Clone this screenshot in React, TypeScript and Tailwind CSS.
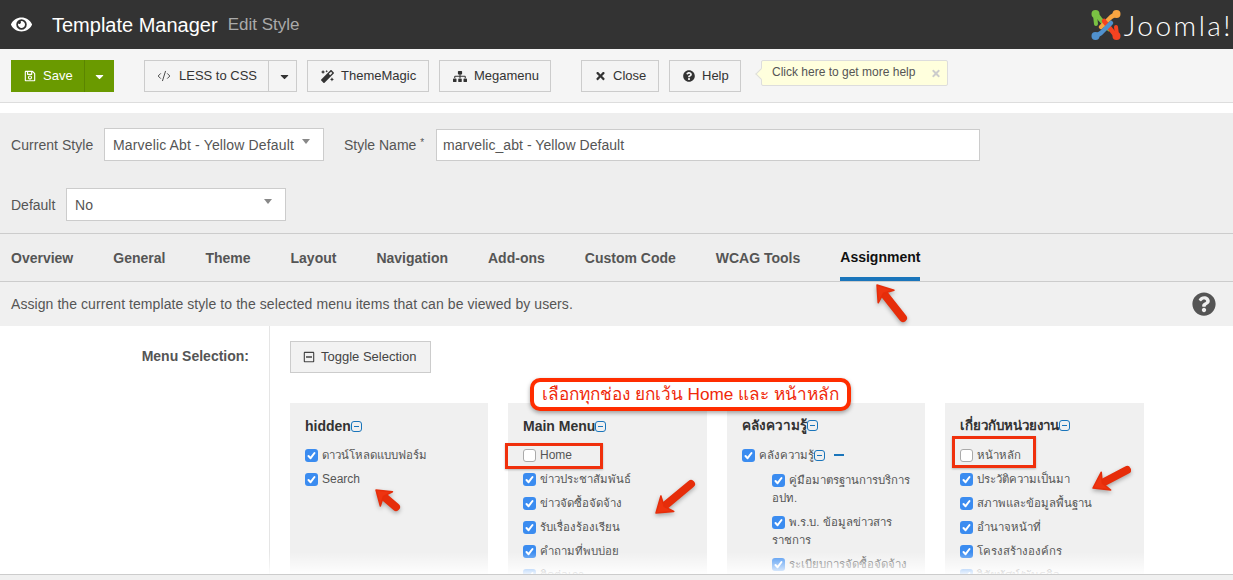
import React from "react";
import { FaEye, FaRegSave, FaMagic, FaSitemap, FaTimes, FaQuestionCircle, FaCaretDown, FaRegMinusSquare } from "react-icons/fa";
import { CodeXml } from "lucide-react";

function Check({ on = true }: { on?: boolean }) {
  return on ? (
    <span className="inline-flex w-[13px] h-[13px] rounded-[3px] bg-[#3b8cf0] items-center justify-center shrink-0">
      <svg viewBox="0 0 13 13" className="w-[13px] h-[13px]" fill="none" stroke="#fff" strokeWidth="2" strokeLinecap="round" strokeLinejoin="round">
        <path d="M3.5 7 L5.6 9.2 L9.5 4" />
      </svg>
    </span>
  ) : (
    <span className="inline-block w-[13px] h-[13px] rounded-[3px] bg-white border border-[#aaa] shrink-0" />
  );
}

function Item({ label, on = true }: { label: string; on?: boolean }) {
  const thai = /[\u0E00-\u0E7F]/.test(label);
  return (
    <div className={`flex items-center gap-[4px] h-[24px] text-[#555] ${thai ? "text-[11.4px]" : "text-[12px]"}`}>
      <Check on={on} />
      <span className={`whitespace-nowrap ${thai ? "pt-[2px]" : ""}`}>{label}</span>
    </div>
  );
}

function Minus() {
  return (
    <span className="inline-block w-[11px] h-[11px] border border-[#1a75bb] rounded-[3px] relative align-[-1px] shrink-0">
      <span className="absolute left-[2px] right-[2px] top-[4px] h-px bg-[#1a75bb]" />
    </span>
  );
}

function Column({ title, titleClass = "text-[14px]", className, children }: { title: string; titleClass?: string; className: string; children: React.ReactNode }) {
  return (
    <div className={`bg-[#f0f0f0] h-[300px] pl-[15px] pr-[10px] pt-[14px] ${className}`}>
      <div className={`font-bold text-[#333] h-[26px] leading-[18px] whitespace-nowrap ${titleClass}`}>{title}<Minus /></div>
      {children}
    </div>
  );
}

function Btn({ children, className = "" }: { children: React.ReactNode; className?: string }) {
  return (
    <div className={`h-[32px] flex items-center gap-[7px] border border-[#ccc] bg-[#f4f4f4] text-[13px] text-[#333] ${className}`}>{children}</div>
  );
}

function Select({ value, className }: { value: string; className: string }) {
  return (
    <div className={`relative h-[33px] bg-white border border-[#ccc] pl-[8px] pt-[2px] flex items-center text-[14px] tracking-[0.15px] text-[#555] ${className}`}>
      {value}
      <span className="absolute right-[13px] top-[10px] w-0 h-0 border-l-[4px] border-r-[4px] border-t-[5px] border-l-transparent border-r-transparent border-t-[#888]" />
    </div>
  );
}

function Arrow({ tip, tail, w = 8, head = 14 }: { tip: [number, number]; tail: [number, number]; w?: number; head?: number }) {
  const dx = tail[0] - tip[0];
  const dy = tail[1] - tip[1];
  const l = Math.hypot(dx, dy);
  const ux = dx / l, uy = dy / l;
  const px = -uy, py = ux;
  const sx = tip[0] + ux * head * 1.05, sy = tip[1] + uy * head * 1.05;
  const nx = tip[0] + ux * head * 0.75, ny = tip[1] + uy * head * 0.75;
  const s = head * 0.72;
  const points = `${tip[0]},${tip[1]} ${sx + px * s},${sy + py * s} ${nx},${ny} ${sx - px * s},${sy - py * s}`;
  return (
    <g>
      <line x1={nx} y1={ny} x2={tail[0]} y2={tail[1]} stroke="#e62d0a" strokeWidth={w} strokeLinecap="round" />
      <polygon points={points} fill="#ee3410" stroke="#e62d0a" strokeLinejoin="round" strokeWidth={1.5} />
    </g>
  );
}

function JoomlaMark() {
  return (
    <svg viewBox="0 0 30 32" className="w-[30px] h-[32px] shrink-0" fill="none" strokeLinecap="round" strokeLinejoin="round">
      <path d="M5 5 L9 10 L18 20" stroke="#7ac143" strokeWidth="4.5" />
      <path d="M4 6 L5 15" stroke="#7ac143" strokeWidth="4" />
      <circle cx="4.5" cy="5" r="4" fill="#7ac143" />
      <path d="M25 5 L20 8 L10 18" stroke="#f9a541" strokeWidth="4.5" />
      <circle cx="25.5" cy="5" r="4" fill="#f9a541" />
      <path d="M25 27 L21 22 L13 12" stroke="#f44321" strokeWidth="4.5" />
      <path d="M26 26 L25 18" stroke="#f44321" strokeWidth="4" />
      <circle cx="25.5" cy="27" r="4" fill="#f44321" />
      <path d="M5 27 L10 24 L20 14" stroke="#5091cd" strokeWidth="4.5" />
      <circle cx="4.5" cy="27" r="4" fill="#5091cd" />
    </svg>
  );
}

const tabs = ["Overview", "General", "Theme", "Layout", "Navigation", "Add-ons", "Custom Code", "WCAG Tools"];

export default function App() {
  return (
    <div className="relative w-[1233px] h-[580px] overflow-hidden bg-white font-['Liberation_Sans','Noto_Sans',sans-serif]">
      <header className="h-[49px] bg-[#333] flex items-center text-white overflow-hidden">
        <FaEye className="w-[21px] h-[21px] ml-[11px] text-white" />
        <span className="ml-[20px] text-[20px]">Template Manager</span>
        <span className="ml-[10px] text-[17px] text-[#aaa]">Edit Style</span>
        <div className="ml-auto flex items-center gap-[3px]">
          <JoomlaMark />
          <span className="font-['Lato',sans-serif] font-light text-[28px] tracking-[2.5px] leading-none">Joomla!</span>
        </div>
      </header>

      <div className="h-[54px] bg-[#f5f5f5] border-b border-[#ddd] pl-[11px] pt-[11px] flex items-start">
        <div className="h-[32px] w-[103px] flex bg-[#6a9a00] text-white text-[13px]">
          <div className="w-[74px] flex items-center gap-[7px] pl-[13px] border-r border-[#5b8500]">
            <FaRegSave className="w-[12px] h-[12px]" /> Save
          </div>
          <div className="flex-1 flex items-center justify-center"><FaCaretDown className="w-[13px] h-[13px]" /></div>
        </div>
        <Btn className="ml-[30px] w-[153px]">
          <div className="w-[124px] h-full flex items-center gap-[8px] pl-[12px] border-r border-[#ccc]"><CodeXml className="w-[14px] h-[14px]" strokeWidth={1.5} /> LESS to CSS</div>
          <FaCaretDown className="w-[13px] h-[13px] ml-[2px]" />
        </Btn>
        <Btn className="ml-[10px] w-[122px] pl-[13px]"><FaMagic className="w-[13px] h-[13px]" /> ThemeMagic</Btn>
        <Btn className="ml-[10px] w-[112px] pl-[13px]"><FaSitemap className="w-[14px] h-[13px]" /> Megamenu</Btn>
        <Btn className="ml-[30px] w-[78px] pl-[13px]"><FaTimes className="w-[11px] h-[12px]" /> Close</Btn>
        <Btn className="ml-[10px] w-[72px] pl-[13px]"><FaQuestionCircle className="w-[12px] h-[12px]" /> Help</Btn>
        <div className="relative ml-[20px] w-[187px] h-[26px] bg-[#ffffdd] border border-[#ddd] rounded-[2px] text-[12px] text-[#555] flex items-center pl-[10px] pb-[2px]">
          Click here to get more help
          <span className="absolute left-[-5px] top-[9px] w-[8px] h-[8px] rotate-45 bg-[#ffffdd] border-l border-b border-[#ddd]" />
          <FaTimes className="absolute right-[6px] top-[7px] w-[10px] h-[11px] text-[#ccc]" />
        </div>
      </div>

      <div className="mt-[10px] h-[121px] bg-[#eee] border-b border-[#ccc] pl-[11px] pt-[15px] text-[14px] text-[#555]">
        <div className="flex items-center h-[33px]">
          <span className="w-[93px] pt-[2px] tracking-[0.05px]">Current Style</span>
          <Select value="Marvelic Abt - Yellow Default" className="w-[220px]" />
          <span className="ml-[20px] w-[92px] pt-[2px]">Style Name <span className="text-[10px] align-top">*</span></span>
          <div className="w-[544px] h-[32px] bg-white border border-[#ccc] pl-[6px] pt-[2px] flex items-center text-[14px] tracking-[0.05px] text-[#555]">marvelic_abt - Yellow Default</div>
        </div>
        <div className="flex items-center h-[33px] mt-[27px]">
          <span className="w-[55px] pt-[2px]">Default</span>
          <Select value="No" className="w-[220px]" />
        </div>
      </div>

      <nav className="h-[48px] bg-[#eee] border-b border-[#ccc] pl-[11px] flex gap-[40px] text-[14px] font-bold text-[#555]">
        {tabs.map((t) => (
          <span key={t} className="h-full flex items-center pt-[1px]">{t}</span>
        ))}
        <span className="h-full flex items-center pt-[3px] border-b-[4px] border-[#1a75bb] text-[#111]">Assignment</span>
      </nav>

      <div className="h-[44px] bg-[#f0f0f0] pl-[11px] pr-[17px] flex items-center justify-between text-[14px] tracking-[0.07px] text-[#555]">
        <span>Assign the current template style to the selected menu items that can be viewed by users.</span>
        <FaQuestionCircle className="w-[24px] h-[24px] text-[#555]" />
      </div>

      <div className="flex h-[254px]">
        <div className="w-[270px] shrink-0 border-r border-[#e5e5e5] pr-[20px] pt-[20px] text-right text-[14px] font-bold text-[#555]">Menu Selection:</div>
        <div className="pl-[20px] pt-[15px]">
          <Btn className="w-[141px] pl-[12px] !gap-[6px] !bg-[#f2f2f2] text-[#444]"><FaRegMinusSquare className="w-[12px] h-[12px]" /> Toggle Selection</Btn>
          <div className="flex gap-[20px] mt-[30px]">
            <Column title="hidden" className="w-[198px]">
              <Item label="ดาวน์โหลดแบบฟอร์ม" />
              <Item label="Search" />
            </Column>
            <Column title="Main Menu" className="w-[199px]">
              <Item label="Home" on={false} />
              <Item label="ข่าวประชาสัมพันธ์" />
              <Item label="ข่าวจัดซื้อจัดจ้าง" />
              <Item label="รับเรื่องร้องเรียน" />
              <Item label="คำถามที่พบบ่อย" />
              <Item label="ติดต่อเรา" />
            </Column>
            <Column title="คลังความรู้" titleClass="text-[13.5px]" className="w-[198px]">
              <div className="flex items-center gap-[4px] h-[24px] text-[11.4px] text-[#555]">
                <Check />
                <span className="flex items-center pt-[2px]">คลังความรู้<Minus /></span>
                <span className="ml-[5px] w-[10px] h-[2px] bg-[#1a75bb]" />
              </div>
              <div className="pl-[30px] pt-px text-[11.4px] text-[#555] leading-[18px]">
                <div className="pt-[3px] pb-[3px]">
                  <div className="flex items-center gap-[4px] h-[18px] whitespace-nowrap"><Check />คู่มือมาตรฐานการบริการ</div>
                  <div className="h-[18px]">อปท.</div>
                </div>
                <div className="pt-[3px] pb-[3px]">
                  <div className="flex items-center gap-[4px] h-[18px] whitespace-nowrap"><Check />พ.ร.บ. ข้อมูลข่าวสาร</div>
                  <div className="h-[18px]">ราชการ</div>
                </div>
                <div className="pt-[3px]">
                  <div className="flex items-center gap-[4px] h-[18px] whitespace-nowrap"><Check />ระเบียบการจัดซื้อจัดจ้าง</div>
                </div>
              </div>
            </Column>
            <Column title="เกี่ยวกับหน่วยงาน" titleClass="text-[13.3px]" className="w-[199px]">
              <Item label="หน้าหลัก" on={false} />
              <Item label="ประวัติความเป็นมา" />
              <Item label="สภาพและข้อมูลพื้นฐาน" />
              <Item label="อำนาจหน้าที่" />
              <Item label="โครงสร้างองค์กร" />
              <Item label="วิสัยทัศน์/พันธกิจ" />
            </Column>
          </div>
        </div>
      </div>

      <div className="absolute left-0 right-0 top-[552px] h-[22px] bg-gradient-to-b from-[#ffffff00] to-[#ffffffe6]" />
      <div className="absolute left-0 right-0 top-[574px] h-[6px] bg-[#f0f0f0] border-t border-[#ccc]" />

      <div className="absolute left-[530px] top-[378px] w-[321px] h-[33px] bg-white border-[4px] border-[#ff2d00] rounded-[10px] shadow-[0_2px_4px_rgba(0,0,0,0.35)] flex items-center justify-center text-[17.2px] text-[#f0290a] whitespace-nowrap">เลือกทุกช่อง ยกเว้น Home และ หน้าหลัก</div>
      <div className="absolute left-[505px] top-[443px] w-[98px] h-[26px] border-[3px] border-[#f0300c] shadow-[0_1px_2px_rgba(0,0,0,0.25)]" />
      <div className="absolute left-[952px] top-[436px] w-[84px] h-[32px] border-[3px] border-[#f0300c] shadow-[0_1px_2px_rgba(0,0,0,0.25)]" />

      <svg className="absolute left-0 top-0 w-[1233px] h-[580px] pointer-events-none drop-shadow-[0_2px_2px_rgba(0,0,0,0.3)]" viewBox="0 0 1233 580">
        <Arrow tip={[877, 285]} tail={[903, 318]} />
        <Arrow tip={[376, 490]} tail={[396, 507]} w={8} head={13} />
        <Arrow tip={[656, 513]} tail={[691, 484]} />
        <Arrow tip={[1093, 488]} tail={[1127, 470]} />
      </svg>
    </div>
  );
}
